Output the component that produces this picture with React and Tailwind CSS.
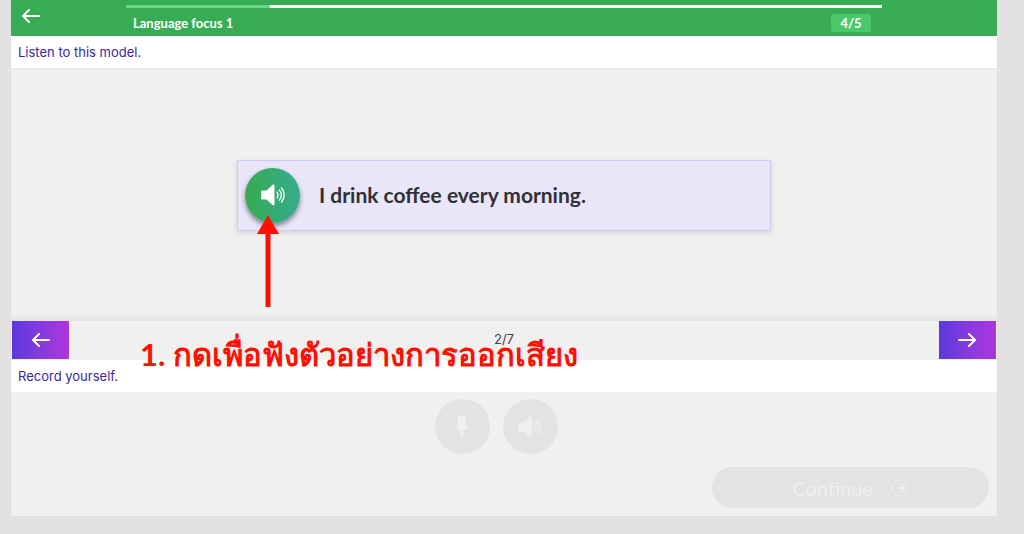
import React from 'react';

function Arrow({ className, flip }) {
  return (
    <svg className={className} viewBox="0 0 18 14" fill="none" stroke="currentColor" strokeWidth="2" strokeLinecap="round" strokeLinejoin="round" aria-hidden="true">
      {flip ? <path d="M1 7h16M11 1l6 6-6 6" /> : <path d="M17 7H1M7 1L1 7l6 6" />}
    </svg>
  );
}

function Speaker({ className }) {
  return (
    <svg className={className} viewBox="0 0 24 22" fill="none" stroke="currentColor" strokeLinecap="round" aria-hidden="true">
      <path d="M1 6.500h4.500l6-5.600c.7-.6 2-.2 2 .8v18.600c0 1-1.300 1.400-2 .8l-6-5.600H1c-.5 0-.8-.3-.8-.8V7.300c0-.5.3-.8.800-.8z" fill="currentColor" stroke="none" />
      <path d="M16 8.200c1.300 1.700 1.300 3.900 0 5.600M18.300 6c2.500 3 2.500 7 0 10M20.600 4c3.400 4.200 3.400 9.800 0 14" strokeWidth="1.300" />
    </svg>
  );
}

function Instruction({ children, className }) {
  return <p className={`bg-white px-[7px] font-['Inter',sans-serif] text-[13px] leading-8 text-[#3a289c] ${className}`}>{children}</p>;
}

export default function App() {
  return (
    <div className="min-h-screen bg-[#e3e1e2] pr-[27px] pb-[18px] pl-[11px] font-['Lato',sans-serif]">
      <main className="bg-[#f0f0f0] shadow-[0_0_2px_#d8d8d8]">
        <header className="flex h-9 bg-[#37ac54] text-white">
          <div className="w-[115px] shrink-0">
            <button aria-label="Back" className="mt-2 ml-[11px] flex h-4 items-center">
              <Arrow className="h-[14px] w-[18px]" />
            </button>
          </div>
          <div className="flex-1 pt-[5px]">
            <div className="flex h-[3px] bg-white" role="progressbar" aria-label="Lesson progress" aria-valuenow={4} aria-valuemax={5}>
              <div className="w-[19%] bg-[#6ed588]" />
            </div>
            <div className="flex items-center justify-between pt-[5px] pr-[11px] pl-[7px] text-[13px] font-bold">
              <h1 className="leading-5">Language focus 1</h1>
              <span className="w-10 rounded-xs bg-[#4bc86c] text-center leading-[18px]">4/5</span>
            </div>
          </div>
          <div className="w-[115px] shrink-0" />
        </header>

        <Instruction className="border-b border-[#e6e6e6]">Listen to this model.</Instruction>

        <section className="flex h-[252px] items-center justify-center bg-linear-to-b from-[#f0f0f0] from-97% to-[#e4e4e4]">
          <div className="flex h-[71px] w-[534px] items-center border border-[#cdc8f5] bg-[#e9e6fa] px-[7px] shadow-[0_2px_6px_rgba(0,0,0,0.12)]">
            <div className="relative">
              <button aria-label="Play the model" className="flex size-[55px] items-center justify-center rounded-full bg-linear-to-r from-[#36ab50] to-[#37ab8c] text-white shadow-[0_3px_5px_rgba(0,0,0,0.45)]">
                <Speaker className="h-[22px] w-6" />
              </button>
              <svg className="absolute top-[47px] left-3 h-[92px] w-[22px] text-[#fe0f00]" viewBox="0 0 22 92" fill="currentColor" aria-hidden="true">
                <path d="M11 0l11 19h-8.500v73h-5V19H0z" />
              </svg>
            </div>
            <p className="pl-[19px] text-[21px] font-bold text-[#303036]">I drink coffee every morning.</p>
          </div>
        </section>

        <nav className="relative flex h-[38px] items-center justify-between px-px">
          <button aria-label="Previous" className="flex h-[38px] w-[57px] items-center justify-center bg-linear-to-r from-[#5b38dc] to-[#ad35dc] text-white">
            <Arrow className="h-[14px] w-[18px]" />
          </button>
          <span className="font-['Inter',sans-serif] text-[13px] text-[#404048]">2/7</span>
          <button aria-label="Next" className="flex h-[38px] w-[57px] items-center justify-center bg-linear-to-r from-[#5b38dc] to-[#ad35dc] text-white">
            <Arrow flip className="h-[14px] w-[18px]" />
          </button>
          <p className="absolute top-[13px] left-[129px] text-[31px] leading-10 font-bold whitespace-nowrap text-[#fe0f00]">1. กดเพื่อฟังตัวอย่างการออกเสียง</p>
        </nav>

        <Instruction className="border-t border-[#f0f0f0]">Record yourself.</Instruction>

        <section className="px-2 pt-[7px] pb-2">
          <div className="flex justify-center gap-[13px] pr-4">
            <button aria-label="Record" disabled className="flex size-[55px] items-center justify-center rounded-full bg-[#e4e2e3] text-[#f0eff0]">
              <svg className="h-[22px] w-3" viewBox="0 0 12 22" fill="currentColor" aria-hidden="true">
                <path d="M2 0h8v8l2 3-2 3H7.500v8h-3v-8H2l-2-3 2-3z" />
              </svg>
            </button>
            <button aria-label="Play the recording" disabled className="flex size-[55px] items-center justify-center rounded-full bg-[#e4e2e3] text-[#f0eff0]">
              <Speaker className="h-[22px] w-6" />
            </button>
          </div>
          <div className="mt-[13px] flex justify-end">
            <button disabled className="flex h-[41px] w-[277px] items-center justify-center gap-[18px] rounded-full bg-[#e4e2e3] text-xl text-[#f0eff0]">
              Continue
              <svg className="size-[18px]" viewBox="0 0 18 18" fill="none" stroke="currentColor" strokeWidth="1" aria-hidden="true">
                <circle cx="9" cy="9" r="8" />
                <path d="M5 9h8M9.500 5.500L13 9l-3.500 3.500" strokeWidth="2" />
              </svg>
            </button>
          </div>
        </section>
      </main>
    </div>
  );
}
